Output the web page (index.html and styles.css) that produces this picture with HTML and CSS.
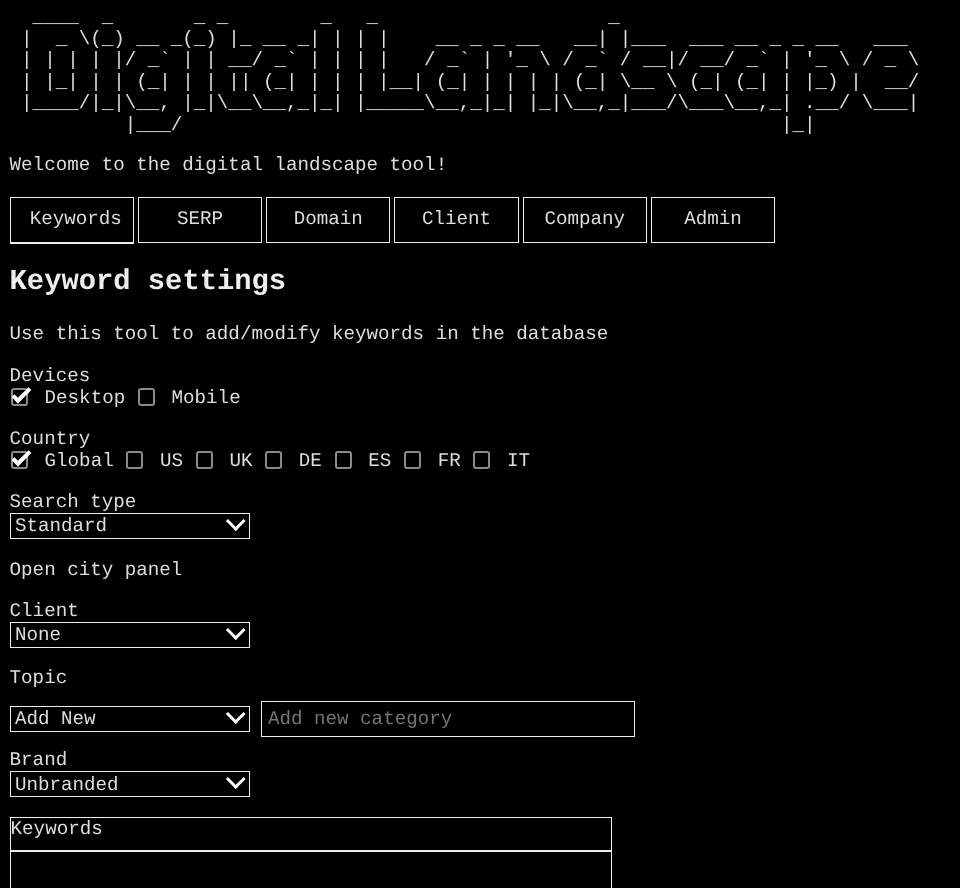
FILE: index.html
```html
<!DOCTYPE html>
<html lang="en">
<head>
    <meta charset="UTF-8">
    <meta name="viewport" content="width=device-width, initial-scale=1.0">
    <title>Digital Landscape</title>
    <link rel="stylesheet" href="styles.css">
</head>
<body>

<pre class="banner">  ____  _       _ _        _   _                    _
 |  _ \(_) __ _(_) |_ __ _| | | |    __ _ _ __   __| |___  ___ __ _ _ __   ___
 | | | | |/ _` | | __/ _` | | | |   / _` | '_ \ / _` / __|/ __/ _` | '_ \ / _ \
 | |_| | | (_| | | || (_| | | | |__| (_| | | | | (_| \__ \ (_| (_| | |_) |  __/
 |____/|_|\__, |_|\__\__,_|_| |_____\__,_|_| |_|\__,_|___/\___\__,_| .__/ \___|
          |___/                                                    |_|</pre>

    <p class="welcome">Welcome to the digital landscape tool!</p>

    <div class="tabs">
        <button class="tab active">Keywords</button>
        <button class="tab">SERP</button>
        <button class="tab">Domain</button>
        <button class="tab">Client</button>
        <button class="tab">Company</button>
        <button class="tab">Admin</button>
    </div>

    <h1>Keyword settings</h1>
    <p class="intro">Use this tool to add/modify keywords in the database</p>

    <div class="field">
        <div class="field-label">Devices</div>
        <div class="checks">
            <label class="check"><input type="checkbox" checked><span class="box"></span>Desktop</label>
            <label class="check"><input type="checkbox"><span class="box"></span>Mobile</label>
        </div>
    </div>

    <div class="field">
        <div class="field-label">Country</div>
        <div class="checks">
            <label class="check"><input type="checkbox" checked><span class="box"></span>Global</label>
            <label class="check"><input type="checkbox"><span class="box"></span>US</label>
            <label class="check"><input type="checkbox"><span class="box"></span>UK</label>
            <label class="check"><input type="checkbox"><span class="box"></span>DE</label>
            <label class="check"><input type="checkbox"><span class="box"></span>ES</label>
            <label class="check"><input type="checkbox"><span class="box"></span>FR</label>
            <label class="check"><input type="checkbox"><span class="box"></span>IT</label>
        </div>
    </div>

    <div class="field">
        <div class="field-label">Search type</div>
        <div class="select-wrap"><select><option>Standard</option><option>Local</option></select></div>
    </div>

    <p class="city-link">Open city panel</p>

    <div class="field">
        <div class="field-label">Client</div>
        <div class="select-wrap"><select><option>None</option></select></div>
    </div>

    <div class="field">
        <div class="field-label">Topic</div>
    </div>
    <div class="topic-row">
        <div class="select-wrap"><select><option>Add New</option></select></div>
        <input type="text" class="new-category" placeholder="Add new category">
    </div>

    <div class="field brand-field">
        <div class="field-label">Brand</div>
        <div class="select-wrap"><select><option>Unbranded</option><option>Branded</option></select></div>
    </div>

    <div class="keywords-head">Keywords</div>
    <textarea class="keywords-input"></textarea>

</body>
</html>
```

FILE: styles.css
```css
html, body {
    height: 100%;
    overflow: hidden;
}
html {
    background-color: #000;
}
body {
    margin: 0;
    padding: 0 9.6px;
    color: #ddd;
    font-family: "Liberation Mono", monospace;
    font-size: 19.2px;
    text-rendering: geometricPrecision;
    filter: grayscale(1); /* page text is plain grey, no coloured fringes */
}
.banner {
    margin: 7px 0 0;
    font-family: inherit;
    font-size: 19.2px;
    line-height: 21.6px;
}
.welcome {
    margin: 17px 0 0;
    line-height: 22px;
}
.tabs {
    display: flex;
    align-items: flex-start;
    gap: 4px;
    margin-top: 21px;
}
.tab {
    width: 124.25px;
    height: 46px;
    padding: 0 0 2px;
    background-color: #000;
    color: #ddd;
    border: 1px solid #eee;
    font-family: inherit;
    font-size: 19.2px;
    text-rendering: inherit;
}
.tab.active {
    padding-left: 8px;
    height: 47px;
    border-bottom-width: 2px;
}
h1 {
    margin: 21.8px 0 0;
    font-size: 28.8px;
    line-height: 33px;
    color: #eee;
}
.intro {
    margin: 24.6px 0 0;
    padding-bottom: 0.6px;
    line-height: 22px;
}
.field {
    margin-top: 19.2px;
}
.field-label {
    line-height: 22px;
}
.checks {
    display: flex;
    gap: 11.4px;
    line-height: 22px;
}
.check {
    display: flex;
    align-items: center;
}
.check input {
    display: none;
}
.box {
    position: relative;
    box-sizing: border-box;
    width: 17px;
    height: 18px;
    margin: 0 16.6px 2px 1.4px;
    border: 2px solid #8a8a8a;
    border-radius: 3px;
}
.check input:checked + .box::after {
    content: "";
    position: absolute;
    left: 4.5px;
    top: -5.9px;
    width: 9px;
    height: 19px;
    box-sizing: border-box;
    border: solid #fff;
    border-width: 0 4px 4px 0;
    transform: rotate(45deg);
}
.select-wrap {
    position: relative;
    width: 240px;
    height: 26.2px;
    flex-shrink: 0;
}
/* chevron drawn over the select, it has no native arrow */
.select-wrap::after {
    content: "";
    position: absolute;
    top: 1.2px;
    right: 7.5px;
    width: 13.5px;
    height: 13.5px;
    box-sizing: border-box;
    border: solid #fff;
    border-width: 0 3px 3px 0;
    transform: rotate(45deg);
    pointer-events: none;
}
select {
    appearance: none;
    display: block;
    box-sizing: border-box;
    width: 100%;
    height: 100%;
    padding: 0.5px 4.4px 0;
    background-color: #000;
    color: #ddd;
    border: 1px solid #eee;
    border-radius: 0;
    font-family: inherit;
    font-size: 19.2px;
    text-rendering: inherit;
}
.city-link {
    margin: 19.5px 0 0;
    line-height: 22px;
}
.topic-row {
    display: flex;
    align-items: center;
    gap: 11.4px;
    margin-top: 11.7px;
}
.topic-row .select-wrap {
    height: 26.8px;
}
.new-category {
    width: 374px;
    height: 36px;
    box-sizing: border-box;
    padding: 0 6px;
    background-color: #000;
    color: #ddd;
    border: 1px solid #eee;
    font-family: inherit;
    font-size: 19.2px;
    text-rendering: inherit;
}
.brand-field {
    margin-top: 12.2px;
}
.keywords-head {
    box-sizing: border-box;
    width: 602px;
    height: 34px;
    margin-top: 19.2px;
    border: 1px solid #eee;
    line-height: 22px;
}
.keywords-input {
    display: block;
    box-sizing: border-box;
    width: 602px;
    height: 120px;
    background-color: #000;
    color: #ddd;
    border: 1px solid #eee;
    border-radius: 0;
    font-family: inherit;
    font-size: 19.2px;
}
```
